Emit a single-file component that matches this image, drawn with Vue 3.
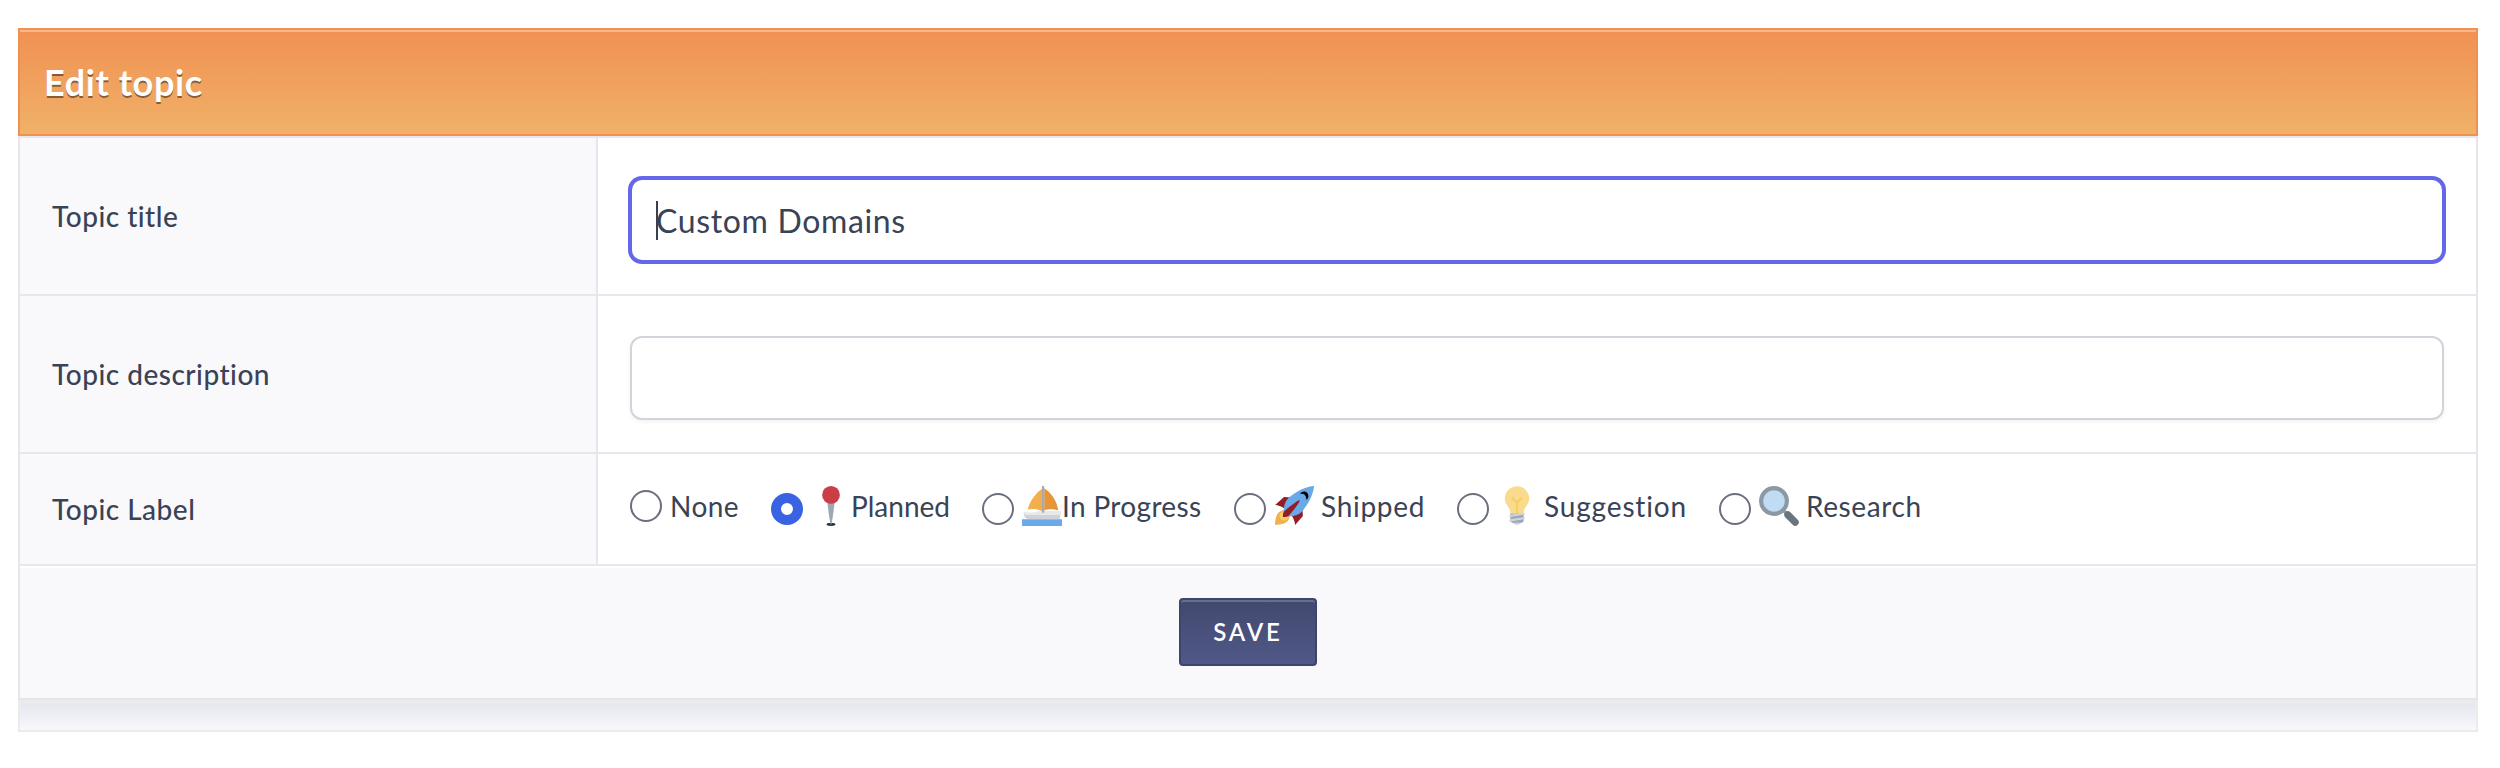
<script setup>
import { ref } from 'vue'

const title = ref('Custom Domains')
const description = ref('')
const selected = ref('planned')
const labels = [
  { id: 'none', text: 'None' },
  { id: 'planned', text: 'Planned' },
  { id: 'progress', text: 'In Progress' },
  { id: 'shipped', text: 'Shipped' },
  { id: 'suggestion', text: 'Suggestion' },
  { id: 'research', text: 'Research' },
]
</script>

<template>
  <main class="panel">
    <header class="head"><h1>Edit topic</h1></header>
    <div class="row">
      <div class="name">Topic title</div>
      <div class="value">
        <div class="field focused"><i class="caret"></i><span class="typed">{{ title }}</span></div>
      </div>
    </div>
    <div class="row">
      <div class="name">Topic description</div>
      <div class="value"><div class="field">{{ description }}</div></div>
    </div>
    <div class="row short">
      <div class="name">Topic Label</div>
      <div class="value options">
        <div v-for="l in labels" :key="l.id" class="option" :class="l.id" @click="selected = l.id">
          <span class="radio" :class="{ on: selected === l.id }"></span>
          <svg v-if="l.id === 'planned'" class="emoji" viewBox="0 0 36 36">
            <ellipse cx="18" cy="34.5" rx="4" ry="1.5" fill="#2a2f33" />
            <path fill="#9ca9b4" d="M14.339 10.725S16.894 34.998 18.001 35c1.106.001 3.66-24.275 3.66-24.275z" />
            <circle cx="18" cy="8" r="8" fill="#cb3e48" />
          </svg>
          <svg v-else-if="l.id === 'progress'" class="emoji" viewBox="0 0 36 36">
            <path fill="#69a9e9" d="M0 30h36v6H0z" />
            <path fill="#f3af4e" d="M18 2.5C13 6 7 13 5.2 21.2c3-1 8.800-.8 12.800 1.300z" />
            <path fill="#e69538" d="M20 2c6 4 11.500 11 12.600 20-4-1.400-9-1.200-12.600 0z" />
            <path fill="#d0d2d4" d="M1.500 25h33.300L34 29.800H5.500C3.500 29.800 2 28 1.500 25z" />
            <path fill="#e7e8e9" d="M1 23.400c3 .5 7 .6 10 .2 3-.5 5-1 8-1h16v3.400H4c-1.500 0-2.600-1.200-3-2.600z" />
            <path fill="#a7a9ac" d="M18 0h2v24h-2z" />
          </svg>
          <svg v-else-if="l.id === 'shipped'" class="emoji" viewBox="0 0 36 36">
            <path fill="#921d26" d="M1 17l8-7 16 1 1 16-7 8s.001-5.999-6-12-12-6-12-6z" />
            <path fill="#f3af4e" d="M.973 35s-.036-7.979 2.985-11S15 21.187 15 21.187 14.999 29 11.999 32c-3 3-11.026 3-11.026 3z" />
            <circle fill="#f7ce64" cx="9" cy="27" r="4" />
            <path fill="#69a9e9" d="M35.999 0s-10 0-22 10c-6 5-6 14-4 16s11 2 16-4c10-12 10-22 10-22z" />
            <path d="M26.999 5c-1.623 0-3.013.971-3.641 2.36.502-.227 1.055-.36 1.641-.36 2.209 0 4 1.791 4 4 0 .586-.133 1.139-.359 1.64 1.389-.627 2.359-2.017 2.359-3.64 0-2.209-1.791-4-4-4z" />
            <path fill="#921d26" d="M8 28s0-4 1-5 13.001-10.999 14-10-9.001 13-10.001 14S8 28 8 28z" />
          </svg>
          <svg v-else-if="l.id === 'suggestion'" class="emoji" viewBox="0 0 36 36">
            <path fill="#fadb8e" d="M29 11.060c0 6.439-5 7.439-5 13.440 0 3.098-3.123 3.359-5.500 3.359-2.053 0-6.586-.779-6.586-3.361C11.914 18.500 7 17.500 7 11.060 7 5.029 12.285.14 18.083.14 23.883.14 29 5.029 29 11.060z" />
            <path fill="#ced6dc" d="M22.167 32.500c0 .828-2.234 2.500-4.167 2.500-1.933 0-4.167-1.672-4.167-2.500 0-.828 2.233-.5 4.167-.5 1.933 0 4.167-.328 4.167.5z" />
            <path fill="#f7ce64" d="M22.707 10.293c-.391-.391-1.023-.391-1.414 0L18 13.586l-3.293-3.293c-.391-.391-1.023-.391-1.414 0s-.391 1.023 0 1.414L17 15.414V26c0 .553.448 1 1 1s1-.447 1-1V15.414l3.707-3.707c.391-.391.391-1.023 0-1.414z" />
            <path fill="#9ca9b4" d="M24 31c0 1.104-.896 2-2 2h-8c-1.104 0-2-.896-2-2v-6h12v6z" />
            <path fill="none" stroke="#ced6dc" stroke-width="2" stroke-linecap="round" d="M12 31l12-2M12 27l12-2" />
          </svg>
          <svg v-else-if="l.id === 'research'" class="emoji" viewBox="0 0 36 36">
            <path stroke="#8b99a5" stroke-width="3" d="M21 21l4 4" />
            <path stroke="#69757e" stroke-width="6.400" stroke-linecap="round" d="M26 26l6.600 6.600" />
            <circle cx="13.500" cy="13.500" r="13.500" fill="#8b99a5" />
            <circle cx="13.500" cy="13.500" r="9.700" fill="#c1dbf3" />
          </svg>
          <span class="text">{{ l.text }}</span>
        </div>
      </div>
    </div>
    <div class="actions"><button type="button">SAVE</button></div>
    <div class="strip"></div>
  </main>
</template>

<style>
body { margin: 0; background: #fff; }
</style>
<style scoped>
* { box-sizing: border-box; }
.panel {
  width: 2460px;
  margin: 28px 0 0 18px;
  font-family: Lato, "Liberation Sans", sans-serif;
  font-size: 28px;
  line-height: 40px;
  color: #394355;
  white-space: nowrap;
  font-variant-ligatures: none;
}
.head {
  height: 108px;
  padding: 32px 24px 0;
  border: 2px solid #f09152;
  background: linear-gradient(#f09152, #f0b168);
  box-shadow: inset 0 2px 0 rgba(255, 255, 255, .35);
}
h1 {
  margin: 0;
  font-size: 36px;
  line-height: 40px;
  font-weight: 700;
  letter-spacing: .6px;
  color: #fff;
  text-shadow: 0 2px 0 rgba(0, 0, 0, .45);
}
.row {
  display: grid;
  grid-template-columns: 578px 1fr;
  height: 158px;
  border: 2px solid #e6e6ec;
  border-width: 0 2px 2px;
}
.head + .row { height: 160px; border-top-width: 2px; }
.row.short { height: 112px; }
.name {
  padding: 58px 0 0 32px;
  background: #f9f9fc;
  border-right: 2px solid #e6e6ec;
  font-weight: 500;
  letter-spacing: .5px;
}
.short .name { padding-top: 35px; }
.value { padding: 40px 32px 0; }
.field {
  display: flex;
  align-items: center;
  height: 84px;
  padding: 0 24px;
  border: 2px solid #d1d5db;
  border-radius: 12px;
  background: #fff;
  box-shadow: 0 2px 4px rgba(0, 0, 0, .05);
  font-size: 32px;
}
.focused { border-color: #6467e8; box-shadow: 0 0 0 2px #6467e8; }
.caret { width: 2px; height: 39px; margin-right: -2px; background: #374151; }
.typed { padding-top: 2px; letter-spacing: .65px; }
.options { display: flex; padding-top: 32px; }
.option { display: flex; height: 40px; }
.radio {
  width: 32px;
  height: 32px;
  margin: 7px 8px 0 0;
  border: 2px solid #6b7080;
  border-radius: 50%;
  flex: none;
}
.none .radio { margin-top: 4px; }
.radio.on { border: 10px solid #3a63e4; }
.emoji { width: 40px; height: 40px; flex: none; }
.text { line-height: 40px; letter-spacing: .45px; }
.none { width: 141px; }
.planned { width: 211px; }
.planned .text { letter-spacing: 0; }
.progress { width: 252px; }
.progress .text { letter-spacing: .35px; }
.shipped { width: 223px; }
.suggestion { width: 262px; }
.shipped .text, .suggestion .text, .research .text { margin-left: 7px; }
.shipped .text { letter-spacing: .7px; }
.suggestion .text { letter-spacing: .85px; }
.research .text { letter-spacing: .6px; }
.actions {
  display: flex;
  justify-content: center;
  height: 134px;
  padding-top: 32px;
  border: 2px solid #e6e6ec;
  border-top: 0;
  border-bottom-color: #e5e5e9;
  background: #f9f9fc;
  box-shadow: inset 0 2px 0 #fff;
}
button {
  width: 138px;
  height: 68px;
  padding: 0;
  border: 2px solid #3e456c;
  border-radius: 4px;
  background: linear-gradient(#42496f, #505888);
  box-shadow: inset 0 2px 0 rgba(255, 255, 255, .2);
  color: #fff;
  font: 600 24px/40px Lato, sans-serif;
  letter-spacing: 2.8px;
}
.strip {
  height: 32px;
  border: 2px solid #ebebed;
  border-top: 4px solid #ebebed;
  background: linear-gradient(#e6e7ef, #f8f8fc);
}
</style>
